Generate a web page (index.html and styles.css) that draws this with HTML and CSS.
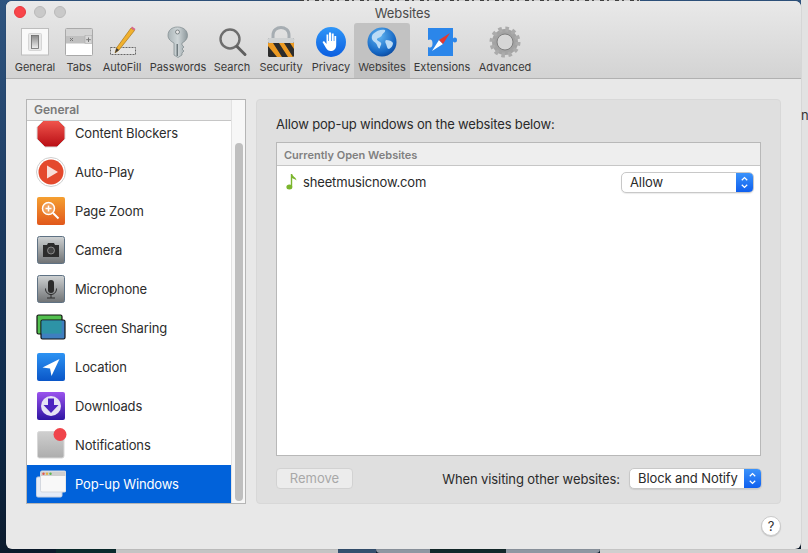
FILE: index.html
```html
<!DOCTYPE html>
<html lang="en">
<head>
<meta charset="utf-8">
<title>Websites</title>
<link rel="stylesheet" href="styles.css">
</head>
<body>
<div class="desktop">
  <div class="bg-top-text"></div>
  <div class="bg-right-panel"><span class="bg-n">n</span></div>
  <div class="bg-bottom bg-bottom-teal"></div>
  <div class="bg-bottom bg-bottom-gray"></div>
  <div class="bg-bottom bg-bottom-blue"></div>
  <div class="bg-bottom bg-bottom-win"></div>
  <div class="bg-bottom bg-bottom-dark"></div>
  <div class="bg-bottom bg-bottom-light"></div>

  <div class="window">
    <header class="toolbar">
      <div class="traffic">
        <span class="light light-red"></span><span class="light"></span><span class="light"></span>
      </div>
      <div class="title">Websites</div>
      <nav class="tabs">
        <div class="tab tab-general">
          <svg class="tab-icon" viewBox="0 0 32 32"><rect x="2.500" y="2.500" width="27" height="26.500" fill="#f9f9f9" stroke="#bdbdbd"/><rect x="9.500" y="7.500" width="13" height="17" rx="1" fill="#e8e8e8" stroke="#d6d6d6"/><rect x="12.500" y="9.500" width="7" height="13" fill="url(#sw)" stroke="#6a6a6a" stroke-width=".8"/><defs><linearGradient id="sw" x1="0" y1="0" x2="0" y2="1"><stop offset="0" stop-color="#8a8a8a"/><stop offset="1" stop-color="#f0f0f0"/></linearGradient></defs></svg>
          <span>General</span>
        </div>
        <div class="tab tab-tabs">
          <svg class="tab-icon" viewBox="0 0 32 32"><rect x="2.500" y="2.500" width="27" height="27" rx="1" fill="#fff" stroke="#a9a9a9"/><rect x="3" y="3" width="26" height="6.500" fill="#d4d4d4"/><rect x="3" y="9.500" width="19" height="8" fill="#c0c0c0"/><rect x="22" y="9.500" width="7" height="8" fill="#d8d8d8" stroke="#aaa" stroke-width=".6"/><path d="M7 12l3 3M10 12l-3 3M25.500 11.500v4.500M23.200 13.700h4.600" stroke="#777" fill="none"/></svg>
          <span>Tabs</span>
        </div>
        <div class="tab tab-autofill">
          <svg class="tab-icon" viewBox="0 0 32 32"><rect x="4.500" y="21.500" width="25" height="7" fill="#e4e4e4" stroke="#666" stroke-dasharray="2 1"/><path d="M9 27l1.500-5L25 2l3.500 2.500L13 24z" fill="#f1b12e" stroke="#a8751a" stroke-width=".7"/><path d="M25 2l1-1.500 3.500 2.500-1 1.500z" fill="#d9668b"/><path d="M9 27l1.500-5 2.500 2z" fill="#3b3b3b"/></svg>
          <span>AutoFill</span>
        </div>
        <div class="tab tab-passwords">
          <svg class="tab-icon" viewBox="0 0 32 32"><path d="M15.500 1c6 0 10 3.500 10 8.500 0 3.500-2.500 6-5.500 7.500v2l2 2-2 2 2 2-2 2v2l-4 2.500-4-2.500V17c-3-1.500-6-4-6-7.500C6 4.500 9.500 1 15.500 1z" fill="url(#key)" stroke="#7e8a8e" stroke-width=".7"/><circle cx="15.500" cy="6" r="2" fill="#e7e7e7" stroke="#5d6669" stroke-width=".7"/><path d="M14.500 18H16v12h-1.500z" fill="#6f7a7e"/><defs><linearGradient id="key" x1="0" y1="0" x2="1" y2="0"><stop offset="0" stop-color="#aab4b7"/><stop offset=".5" stop-color="#cfd6d8"/><stop offset="1" stop-color="#8d989c"/></linearGradient></defs></svg>
          <span>Passwords</span>
        </div>
        <div class="tab tab-search">
          <svg class="tab-icon" viewBox="0 0 32 32"><circle cx="14" cy="13" r="9.500" fill="#dcdcdc" fill-opacity=".5" stroke="#6e6e6e" stroke-width="2.400"/><path d="M21 20.500l8 8" stroke="#5f5f5f" stroke-width="3" stroke-linecap="round"/></svg>
          <span>Search</span>
        </div>
        <div class="tab tab-security">
          <svg class="tab-icon" viewBox="0 0 32 32"><path d="M8 13V9c0-10 16-10 16 0v4" fill="none" stroke="#a6adb2" stroke-width="3"/><rect x="3" y="12" width="26" height="19" rx="1.500" fill="#2c2c2c"/><rect x="3" y="12" width="26" height="5" rx="1" fill="#cfd2d3"/><path d="M3 17h5l9 14h-5l-9-11zM14 17h5l9 14h-5zM25 17h4v6z" fill="#ec9a22"/></svg>
          <span>Security</span>
        </div>
        <div class="tab tab-privacy">
          <svg class="tab-icon" viewBox="0 0 32 32"><circle cx="16" cy="16" r="15" fill="url(#pr)"/><path d="M11 22l-3.500-6 1.500-1 2.500 3V8.500h1.800V15h.7V6.500h2V15h.7V7.500h2V15h.7V10h1.800v9c0 4-2.500 6-5.500 6-2.200 0-3.500-1-4.700-3z" fill="#fff"/><defs><linearGradient id="pr" x1="0" y1="0" x2="0" y2="1"><stop offset="0" stop-color="#2f96f8"/><stop offset="1" stop-color="#0b5ee0"/></linearGradient></defs></svg>
          <span>Privacy</span>
        </div>
        <div class="tab tab-websites">
          <svg class="tab-icon" viewBox="0 0 32 32"><circle cx="16" cy="16" r="14.500" fill="url(#gl)"/><path d="M7 8c4-4 9-5 12-4 1 2-2 3-3 5-1 3-4 2-5 4-.5 2 3 2 4 4 1 1-1 3-1 5-1 1-2 0-3-3-1-3-4-3-5-6-.5-2 0-4 1-5zM20 14c3 0 6 1 7 3 0 3-2 5-4 6-2 0-2-3-3-5-1-2-1-3 0-4z" fill="#bcdcf6"/><defs><radialGradient id="gl" cx=".4" cy=".3" r=".8"><stop offset="0" stop-color="#62b6f2"/><stop offset=".7" stop-color="#1567c4"/><stop offset="1" stop-color="#0a3f90"/></radialGradient></defs></svg>
          <span>Websites</span>
        </div>
        <div class="tab tab-extensions">
          <svg class="tab-icon" viewBox="0 0 32 32"><path d="M2 2h25v10.500c1-1.500 4-1.500 4 1.500s-3 3-4 1.500V30H2v-9c3 1.500 4.500 0 4.500-3.500S5 12.500 2 14z" fill="#2b86ea"/><path d="M6 25l7-11 4 4z" fill="#fff"/><path d="M24 7L13 14l4 4z" fill="#e5372f"/></svg>
          <span>Extensions</span>
        </div>
        <div class="tab tab-advanced">
          <svg class="tab-icon" viewBox="0 0 32 32"><circle cx="16" cy="16" r="10.500" fill="#d6d6d6" stroke="#a3a3a3" stroke-width="5"/><circle cx="16" cy="16" r="13" fill="none" stroke="#ababab" stroke-width="5" stroke-dasharray="3.400 3.400"/><circle cx="16" cy="16" r="8" fill="none" stroke="#7f7f7f" stroke-width="1"/></svg>
          <span>Advanced</span>
        </div>
      </nav>
    </header>

    <main class="content">
      <section class="sidebar">
        <div class="side-head">General</div>
        <ul class="side-list">
          <li class="side-row">
            <svg class="side-icon" viewBox="0 0 30 30"><path d="M9 1h12l8 8v12l-8 8H9l-8-8V9z" fill="url(#stop)" stroke="#ddd"/><defs><linearGradient id="stop" x1="0" y1="0" x2="0" y2="1"><stop offset="0" stop-color="#f45a50"/><stop offset="1" stop-color="#b80d14"/></linearGradient></defs></svg>
            <span>Content Blockers</span>
          </li>
          <li class="side-row">
            <svg class="side-icon" viewBox="0 0 30 30"><circle cx="15" cy="15" r="14.500" fill="#fff" stroke="#cfcfcf"/><circle cx="15" cy="15" r="12.500" fill="#e4492d"/><path d="M11 8.500l11 6.500-11 6.500z" fill="#f8ded8"/></svg>
            <span>Auto-Play</span>
          </li>
          <li class="side-row">
            <svg class="side-icon" viewBox="0 0 30 30"><rect x="1" y="1" width="28" height="28" rx="2" fill="url(#zm)"/><circle cx="12.500" cy="12.500" r="6" fill="#f2a05a" stroke="#fff" stroke-width="1.500"/><path d="M12.500 9.500v6M9.500 12.500h6" stroke="#fff" stroke-width="1.500"/><path d="M17 17l5.500 5.500" stroke="#fff" stroke-width="2"/><defs><linearGradient id="zm" x1="0" y1="0" x2="0" y2="1"><stop offset="0" stop-color="#f5a031"/><stop offset="1" stop-color="#e1571b"/></linearGradient></defs></svg>
            <span>Page Zoom</span>
          </li>
          <li class="side-row">
            <svg class="side-icon" viewBox="0 0 30 30"><rect x="1.500" y="1.500" width="27" height="27" rx="2" fill="url(#gr)" stroke="#5f7284"/><path d="M7 10h4l1-2h6l1 2h4v12H7z" fill="#2c2c2c"/><circle cx="15" cy="15.500" r="3.500" fill="#444" stroke="#aaa" stroke-width=".7"/><defs><linearGradient id="gr" x1="0" y1="0" x2="0" y2="1"><stop offset="0" stop-color="#cfd2d3"/><stop offset="1" stop-color="#6f7274"/></linearGradient></defs></svg>
            <span>Camera</span>
          </li>
          <li class="side-row">
            <svg class="side-icon" viewBox="0 0 30 30"><rect x="1.500" y="1.500" width="27" height="27" rx="2" fill="url(#gr)" stroke="#5f7284"/><rect x="12" y="6" width="6" height="13" rx="3" fill="#2c2c2c"/><path d="M9.500 14.500c0 8 11 8 11 0M15 21v3M11 24h8" stroke="#2c2c2c" stroke-width="1" fill="none"/></svg>
            <span>Microphone</span>
          </li>
          <li class="side-row">
            <svg class="side-icon" viewBox="0 0 30 30"><rect x="1" y="2" width="25" height="19" rx="1.500" fill="#52c04f" stroke="#111" stroke-width="1.200"/><rect x="5" y="7" width="24" height="19" rx="1.500" fill="#3f7fc0" stroke="#111" stroke-width="1.200"/><rect x="5.600" y="7.600" width="20" height="13" fill="#2d93a6"/></svg>
            <span>Screen Sharing</span>
          </li>
          <li class="side-row">
            <svg class="side-icon" viewBox="0 0 30 30"><rect x="1" y="1" width="28" height="28" rx="2" fill="url(#loc)"/><path d="M23.500 7L6.500 15.500l7.500 1 1.500 7.500z" fill="#fff"/><defs><linearGradient id="loc" x1="0" y1="0" x2="0" y2="1"><stop offset="0" stop-color="#2d93f3"/><stop offset="1" stop-color="#0a56c8"/></linearGradient></defs></svg>
            <span>Location</span>
          </li>
          <li class="side-row">
            <svg class="side-icon" viewBox="0 0 30 30"><rect x="1" y="1" width="28" height="28" rx="2" fill="url(#dl)"/><circle cx="15" cy="15" r="10" fill="#e6e3f5"/><path d="M12 7.500h6V14h4.500L15 22l-7.500-8H12z" fill="#4b22c0"/><defs><linearGradient id="dl" x1="0" y1="0" x2="0" y2="1"><stop offset="0" stop-color="#9b53ee"/><stop offset="1" stop-color="#2f16a3"/></linearGradient></defs></svg>
            <span>Downloads</span>
          </li>
          <li class="side-row">
            <svg class="side-icon side-icon-badged" viewBox="0 0 30 30"><rect x="1.500" y="1.500" width="26.500" height="26.500" rx="2" fill="url(#nt)" stroke="#d8d8d8"/><circle cx="24" cy="4.500" r="6.500" fill="#f0444b"/><defs><linearGradient id="nt" x1="0" y1="0" x2="0" y2="1"><stop offset="0" stop-color="#cfcfcf"/><stop offset="1" stop-color="#adadad"/></linearGradient></defs></svg>
            <span>Notifications</span>
          </li>
          <li class="side-row side-selected">
            <svg class="side-icon" viewBox="0 0 30 30"><rect x="0.500" y="8" width="25.500" height="20" rx="1.500" fill="#e5ecf8" stroke="#c5cfe0"/><rect x="4.500" y="2" width="25.500" height="21" rx="1.500" fill="#f8f8f8" stroke="#d4d8df"/><rect x="5" y="2.500" width="24.500" height="4.500" fill="#cfcfcf"/><circle cx="7.500" cy="4.800" r="1.200" fill="#e0584f"/><circle cx="11" cy="4.800" r="1.200" fill="#e6b340"/><circle cx="14.500" cy="4.800" r="1.200" fill="#5bb553"/></svg>
            <span>Pop-up Windows</span>
          </li>
        </ul>
        <div class="scroll-track"><div class="scroll-thumb"></div></div>
      </section>

      <section class="panel">
        <p class="panel-label">Allow pop-up windows on the websites below:</p>
        <div class="sites">
          <div class="sites-head">Currently Open Websites</div>
          <div class="site-row">
            <svg class="note" viewBox="0 0 12 18"><path d="M5.500 1v12.500" stroke="#7bb52d" stroke-width="1.400"/><ellipse cx="3.400" cy="14" rx="3" ry="2.500" fill="#7bb52d"/><path d="M6 1c.5 2.500 4 3 4.500 6.500C9 6 7 5.500 6 5z" fill="#7bb52d"/></svg>
            <span class="site-name">sheetmusicnow.com</span>
            <div class="select">
              <span class="select-text">Allow</span>
              <span class="select-arrows"><svg viewBox="0 0 17 21"><path d="M5.500 8l3-3 3 3M5.500 13l3 3 3-3" fill="none" stroke="#fff" stroke-width="1.400"/></svg></span>
            </div>
          </div>
        </div>
        <div class="panel-foot">
          <button class="btn-remove" type="button">Remove</button>
          <div class="foot-right">
            <span class="foot-label">When visiting other websites:</span>
            <div class="select">
              <span class="select-text">Block and Notify</span>
              <span class="select-arrows"><svg viewBox="0 0 17 21"><path d="M5.500 8l3-3 3 3M5.500 13l3 3 3-3" fill="none" stroke="#fff" stroke-width="1.400"/></svg></span>
            </div>
          </div>
        </div>
      </section>
      <div class="help">?</div>
    </main>
  </div>
</div>
</body>
</html>
```

FILE: styles.css
```css
* { box-sizing: border-box; }
html, body { margin: 0; padding: 0; }
body { width: 808px; height: 553px; overflow: hidden; font-family: Inter, "Liberation Sans", sans-serif; color: #2a2a2a; }

.desktop { position: relative; width: 808px; height: 553px; overflow: hidden; background: linear-gradient(180deg, #2f5580 0%, #1c3a60 40%, #0e2a4a 75%, #0b1a2c 100%); }
.bg-top-text { position: absolute; left: 300px; top: 0; width: 340px; height: 1px; background: repeating-linear-gradient(90deg, #444 0 4px, #ddd 4px 7px, #555 7px 9px, #ddd 9px 15px); }
.bg-right-panel { position: absolute; left: 801px; top: 0; width: 7px; height: 553px; background: #e2e2e2; overflow: hidden; }
.bg-n { position: absolute; left: 0; top: 107px; font-size: 13px; color: #333; }
.bg-bottom { position: absolute; top: 549px; height: 4px; }
.bg-bottom-teal { left: 56px; width: 60px; background: #0a2a2c; }
.bg-bottom-gray { left: 116px; width: 222px; background: #c4c4c4; }
.bg-bottom-blue { left: 338px; width: 38px; background: #34506f; }
.bg-bottom-win { left: 376px; width: 224px; background: #8f97a2; border-radius: 0 0 4px 4px; }
.bg-bottom-dark { left: 430px; width: 76px; background: #12282a; }
.bg-bottom-light { left: 600px; width: 208px; background: #cfcfcf; }

.window { position: absolute; left: 6px; top: 1px; width: 795px; height: 548px; background: #e8e8e8; border-radius: 6px; overflow: hidden; box-shadow: 0 0 1px rgba(0,0,0,.5); display: flex; flex-direction: column; }

.toolbar { position: relative; height: 78px; background: linear-gradient(180deg, #e9e9e9 0%, #d3d3d3 100%); border-bottom: 1px solid #b1b1b1; flex: none; }
.traffic { position: absolute; left: 8px; top: 5px; display: flex; gap: 8px; }
.light { width: 12px; height: 12px; border-radius: 50%; background: #c9c9c9; border: 1px solid #b9b9b9; }
.light-red { background: #f8454a; border-color: #e8383d; }
.title { text-align: center; font-size: 13px; line-height: 16px; padding: 4px 2px 0 0; color: #4a4a4a; letter-spacing: -0.1px; }
.tabs { position: absolute; left: 0; top: 0; width: 100%; height: 77px; }
.tab { position: absolute; top: 22px; height: 55px; display: flex; flex-direction: column; align-items: center; font-size: 11px; line-height: 14px; color: #3a3a3a; white-space: nowrap; }
.tab span { position: absolute; top: 37px; }
.tab-icon { width: 32px; height: 32px; margin-top: 3px; flex: none; }
.tab-general { left: 13px; width: 32px; }
.tab-tabs { left: 57px; width: 32px; }
.tab-autofill { left: 100px; width: 32px; }
.tab-passwords { left: 156px; width: 32px; }
.tab-search { left: 210px; width: 32px; }
.tab-security { left: 259px; width: 32px; }
.tab-privacy { left: 309px; width: 32px; }
.tab-websites { left: 348px; width: 56px; background: #c2c2c2; border-radius: 3px 3px 0 0; }
.tab-extensions { left: 420px; width: 32px; }
.tab-advanced { left: 483px; width: 32px; }

.content { position: relative; flex: 1; display: flex; gap: 10px; padding: 20px 20px 45px 20px; min-height: 0; }

.sidebar { position: relative; width: 220px; flex: none; background: #fff; border: 1px solid #b5b5b5; overflow: hidden; display: flex; flex-direction: column; }
.side-head { height: 21px; flex: none; background: #efefef; border-bottom: 1px solid #c6c6c6; padding-left: 7px; font-size: 12px; line-height: 19px; font-weight: 600; color: #7a7a7a; margin-right: 14px; }
.side-list { list-style: none; margin: 0; padding: 0; width: 204px; flex: 1; min-height: 0; display: flex; flex-direction: column; justify-content: flex-end; overflow: hidden; }
.side-row { flex: none; height: 39px; padding-bottom: 2px; display: flex; align-items: center; gap: 9px; padding-left: 9px; font-size: 13px; letter-spacing: -0.15px; color: #2c2c2c; }
.side-icon { width: 30px; height: 30px; flex: none; }
.side-icon-badged { overflow: visible; }
.side-selected { background: #0162da; color: #fff; height: 38px; padding-bottom: 0; }
.scroll-track { position: absolute; right: 0; top: 0; bottom: 0; width: 14px; background: #f7f7f7; border-left: 1px solid #e2e2e2; }
.scroll-thumb { position: absolute; left: 3px; top: 43px; width: 8px; height: 358px; border-radius: 4px; background: #bfbfbf; }

.panel { flex: 1; background: #dfdfdf; border: 1px solid #d8d8d8; border-radius: 4px; padding: 15px 19px 14px; display: flex; flex-direction: column; min-height: 0; }
.panel-label { margin: 0; font-size: 13px; letter-spacing: -0.16px; line-height: 18px; color: #2a2a2a; height: 27px; flex: none; }
.sites { flex: 1; min-height: 0; background: #fff; border: 1px solid #b8b8b8; }
.sites-head { height: 23px; background: #eeeeee; border-bottom: 1px solid #c6c6c6; padding-left: 7px; font-size: 11px; line-height: 24px; font-weight: 600; color: #808080; }
.site-row { display: flex; align-items: center; padding: 4px 6px 0 9px; height: 28px; }
.note { width: 12px; height: 18px; flex: none; }
.site-name { margin-left: 5px; flex: 1; font-size: 13px; letter-spacing: -0.15px; color: #2a2a2a; }
.select { width: 133px; height: 21px; flex: none; display: flex; background: #fff; border: 1px solid #c8c8c8; border-radius: 5px; overflow: hidden; font-size: 13px; box-shadow: 0 1px 1px rgba(0,0,0,.08); }
.select-text { flex: 1; padding-left: 8px; line-height: 18px; letter-spacing: -0.1px; }
.select-arrows { width: 17px; flex: none; background: linear-gradient(180deg, #3b93fb, #0f5fee); }
.select-arrows svg { display: block; width: 17px; height: 19px; }
.panel-foot { display: flex; flex: none; align-items: center; justify-content: space-between; padding-top: 12px; height: 33px; }
.btn-remove { width: 77px; height: 21px; padding: 0 0 1px; background: #ececec; border: 1px solid #d2d2d2; border-radius: 4px; font-family: inherit; font-size: 13px; color: #a8a8a8; }
.foot-right { display: flex; align-items: center; gap: 9px; margin-right: -1px; }
.foot-label { font-size: 13px; letter-spacing: -0.1px; color: #2a2a2a; }
.help { position: absolute; left: 755px; top: 437px; width: 20px; height: 20px; border-radius: 50%; background: #fff; border: 1px solid #c9c9c9; box-shadow: 0 1px 1px rgba(0,0,0,.15); text-align: center; font-size: 13px; line-height: 18px; color: #333; }
```
